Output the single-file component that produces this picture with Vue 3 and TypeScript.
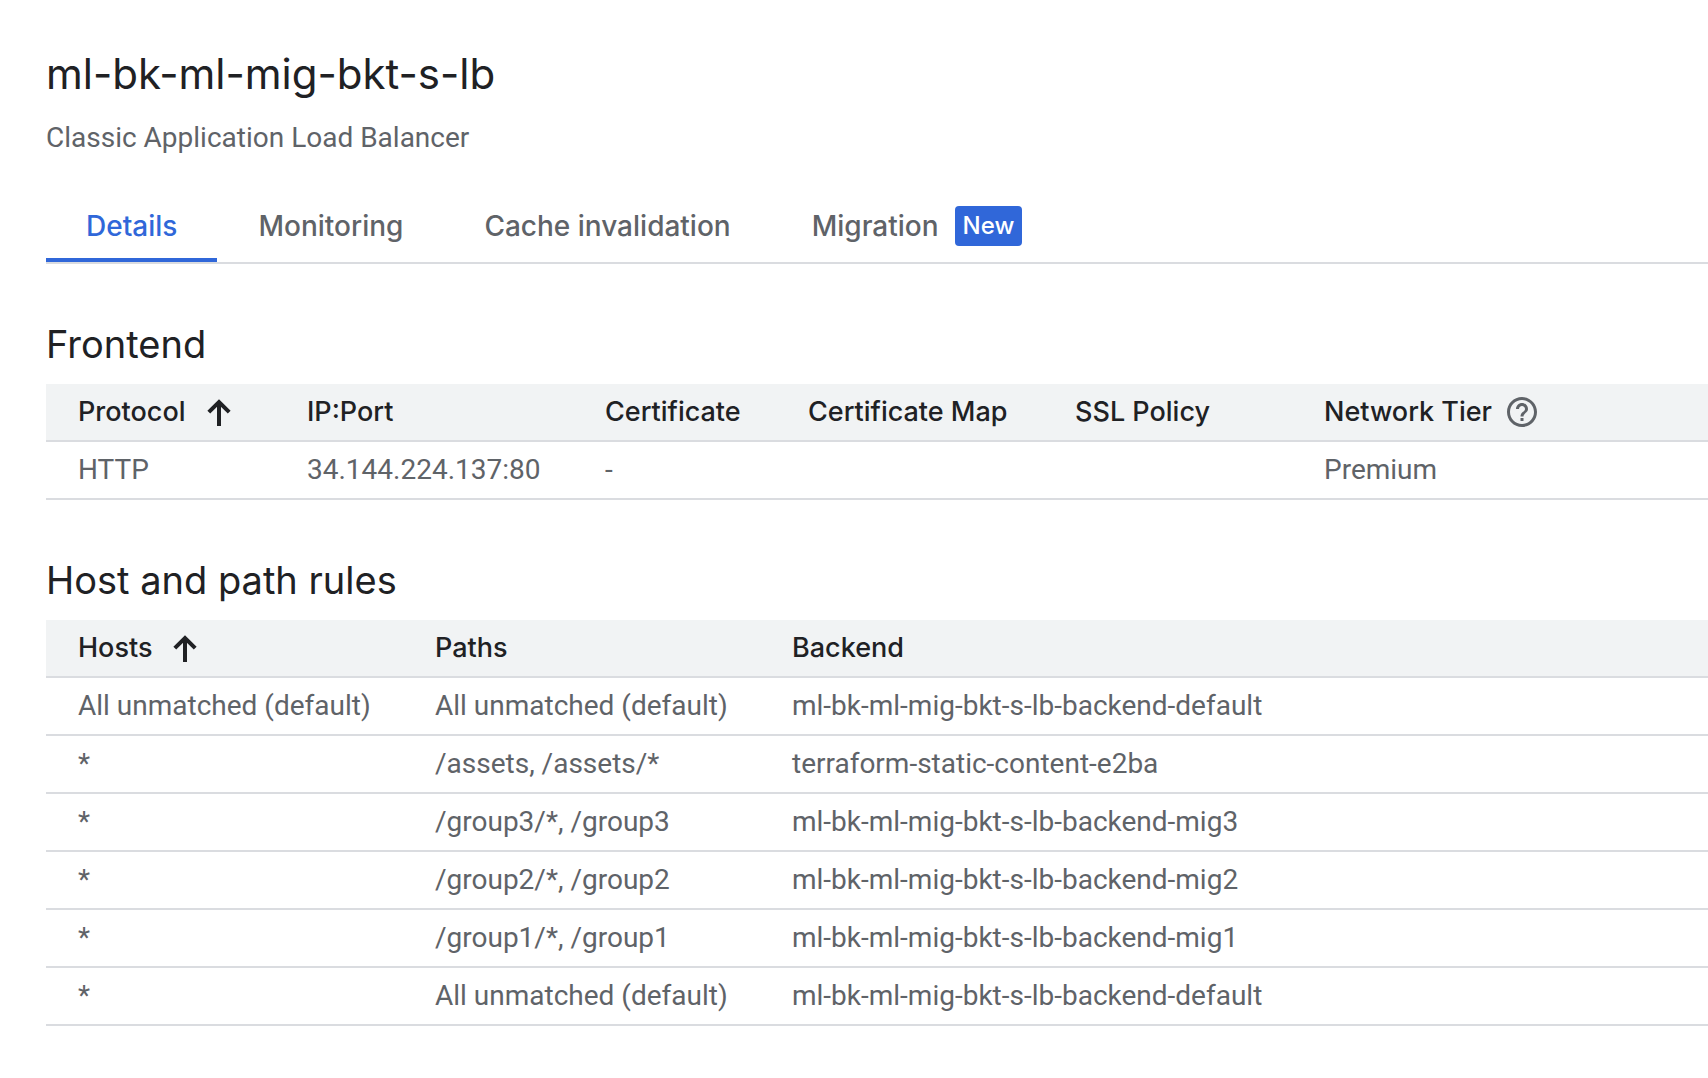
<script setup lang="ts">
import { ref } from 'vue'

interface Tab {
  id: string
  label: string
  badge?: string
}

interface Rule {
  host: string
  paths: string
  backend: string
}

const tabs: Tab[] = [
  { id: 'details', label: 'Details' },
  { id: 'monitoring', label: 'Monitoring' },
  { id: 'cache', label: 'Cache invalidation' },
  { id: 'migration', label: 'Migration', badge: 'New' },
]
const activeTab = ref('details')

const rules: Rule[] = [
  { host: 'All unmatched (default)', paths: 'All unmatched (default)', backend: 'ml-bk-ml-mig-bkt-s-lb-backend-default' },
  { host: '*', paths: '/assets, /assets/*', backend: 'terraform-static-content-e2ba' },
  { host: '*', paths: '/group3/*, /group3', backend: 'ml-bk-ml-mig-bkt-s-lb-backend-mig3' },
  { host: '*', paths: '/group2/*, /group2', backend: 'ml-bk-ml-mig-bkt-s-lb-backend-mig2' },
  { host: '*', paths: '/group1/*, /group1', backend: 'ml-bk-ml-mig-bkt-s-lb-backend-mig1' },
  { host: '*', paths: 'All unmatched (default)', backend: 'ml-bk-ml-mig-bkt-s-lb-backend-default' },
]
</script>

<template>
  <main class="page">
    <h1 class="title">ml-bk-ml-mig-bkt-s-lb</h1>
    <p class="subtitle">Classic Application Load Balancer</p>

    <div class="tabs" role="tablist">
      <button
        v-for="tab in tabs"
        :key="tab.id"
        class="tab"
        :class="{ active: tab.id === activeTab }"
        type="button"
        role="tab"
        :aria-selected="tab.id === activeTab"
        @click="activeTab = tab.id"
      >
        <span>{{ tab.label }}</span>
        <span v-if="tab.badge" class="badge">{{ tab.badge }}</span>
      </button>
    </div>

    <section class="section">
      <h2 id="frontend-heading" class="heading">Frontend</h2>
      <table class="grid" aria-labelledby="frontend-heading">
        <colgroup>
          <col class="col-protocol" />
          <col class="col-ip" />
          <col class="col-cert" />
          <col class="col-map" />
          <col class="col-ssl" />
          <col />
        </colgroup>
        <thead>
          <tr>
            <th scope="col" aria-sort="ascending">
              <button class="sort" type="button">
                Protocol
                <svg class="arrow" viewBox="0 0 24 28" aria-hidden="true">
                  <path d="M12 28V5M1.8 14.2 12 4l10.2 10.2" />
                </svg>
              </button>
            </th>
            <th scope="col">IP:Port</th>
            <th scope="col">Certificate</th>
            <th scope="col">Certificate Map</th>
            <th scope="col">SSL Policy</th>
            <th scope="col">
              <span class="with-help">
                Network Tier
                <button class="help" type="button" aria-label="About network tiers">
                  <svg viewBox="0 0 24 24" aria-hidden="true">
                    <path d="M11 18h2v-2h-2v2zm1-16C6.48 2 2 6.48 2 12s4.48 10 10 10 10-4.48 10-10S17.52 2 12 2zm0 18c-4.41 0-8-3.59-8-8s3.59-8 8-8 8 3.59 8 8-3.59 8-8 8zm0-14c-2.21 0-4 1.79-4 4h2c0-1.1.9-2 2-2s2 .9 2 2c0 2-3 1.75-3 5h2c0-2.25 3-2.5 3-5 0-2.21-1.79-4-4-4z" />
                  </svg>
                </button>
              </span>
            </th>
          </tr>
        </thead>
        <tbody>
          <tr>
            <td>HTTP</td>
            <td>34.144.224.137:80</td>
            <td>-</td>
            <td></td>
            <td></td>
            <td>Premium</td>
          </tr>
        </tbody>
      </table>
    </section>

    <section class="section">
      <h2 id="rules-heading" class="heading">Host and path rules</h2>
      <table class="grid" aria-labelledby="rules-heading">
        <colgroup>
          <col class="col-rule" />
          <col class="col-rule" />
          <col />
        </colgroup>
        <thead>
          <tr>
            <th scope="col" aria-sort="ascending">
              <button class="sort" type="button">
                Hosts
                <svg class="arrow" viewBox="0 0 24 28" aria-hidden="true">
                  <path d="M12 28V5M1.8 14.2 12 4l10.2 10.2" />
                </svg>
              </button>
            </th>
            <th scope="col">Paths</th>
            <th scope="col">Backend</th>
          </tr>
        </thead>
        <tbody>
          <tr v-for="(rule, i) in rules" :key="i">
            <td>{{ rule.host }}</td>
            <td>{{ rule.paths }}</td>
            <td>{{ rule.backend }}</td>
          </tr>
        </tbody>
      </table>
    </section>
  </main>
</template>

<style>
body {
  background: #fff;
}
</style>

<style scoped>
.page {
  padding: 48px 0 48px 46px;
  color: #5f6368;
  font: 400 28px/36px Roboto, sans-serif;
}

.title {
  margin: 0 0 20px;
  color: #202124;
  font: 400 42px/52px Inter, sans-serif;
}

.subtitle {
  margin: 0;
}

.tabs {
  display: flex;
  gap: 1px;
  margin-top: 34px;
  border-bottom: 2px solid #dadce0;
}

.tab {
  display: flex;
  align-items: center;
  gap: 16px;
  height: 72px;
  padding: 0 40px;
  border: 0;
  background: none;
  color: #5f6368;
  font: 500 28px/36px Inter, sans-serif;
  white-space: nowrap;
  cursor: pointer;
}

.tab.active {
  color: #3067d9;
  box-shadow: inset 0 -4px #3067d9;
}

.badge {
  padding: 0 8px;
  border-radius: 4px;
  background: #3067d9;
  color: #fff;
  font-size: 24px;
  line-height: 40px;
}

.section {
  margin-top: 56px;
}

.heading {
  margin: 0 0 16px;
  color: #202124;
  font: 400 38px/48px Inter, sans-serif;
}

.grid {
  width: 100%;
  table-layout: fixed;
  border-collapse: separate;
  border-spacing: 0;
}

.col-protocol {
  width: 229px;
}

.col-ip {
  width: 298px;
}

.col-cert {
  width: 203px;
}

.col-map {
  width: 267px;
}

.col-ssl {
  width: 249px;
}

.col-rule {
  width: 357px;
}

th,
td {
  box-sizing: border-box;
  height: 58px;
  padding: 0 0 0 32px;
  border-bottom: 2px solid #dadce0;
  text-align: left;
  vertical-align: middle;
  white-space: nowrap;
}

th {
  background: #f1f3f4;
  color: #202124;
  font: 500 27px/36px Inter, sans-serif;
}

.sort,
.help {
  padding: 0;
  border: 0;
  background: none;
  color: inherit;
  font: inherit;
  cursor: pointer;
}

.sort {
  display: flex;
  align-items: center;
  gap: 21px;
}

.arrow {
  width: 24px;
  height: 28px;
  fill: none;
  stroke: currentColor;
  stroke-width: 4;
}

.with-help {
  display: flex;
  align-items: center;
  gap: 12px;
}

.help {
  display: flex;
  color: #5f6368;
}

.help svg {
  width: 36px;
  height: 36px;
  fill: currentColor;
}
</style>
